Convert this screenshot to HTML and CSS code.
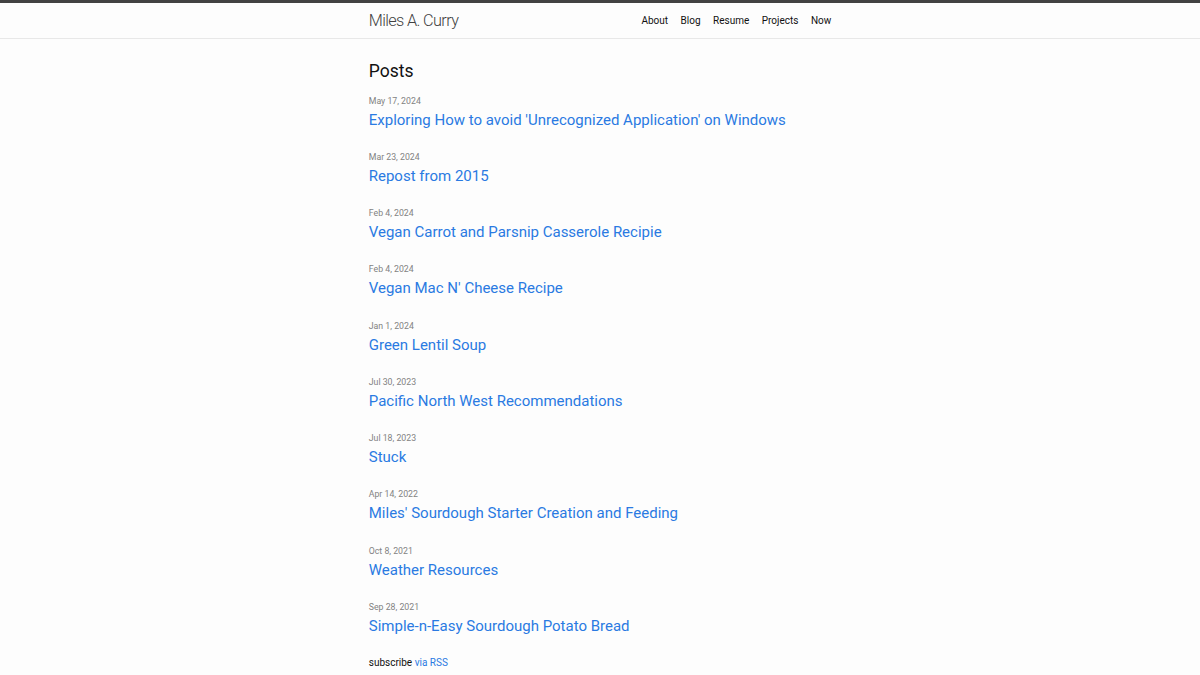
FILE: index.html
```html
<!DOCTYPE html>
<html lang="en">
<head>
<meta charset="utf-8">
<title>Miles A. Curry</title>
<link rel="stylesheet" href="styles.css">
</head>
<body>
<header class="site-header">
  <div class="wrapper header-inner">
    <a class="site-title" href="#">Miles A. Curry</a>
    <nav class="site-nav">
      <a class="page-link" href="#">About</a>
      <a class="page-link" href="#">Blog</a>
      <a class="page-link" href="#">Resume</a>
      <a class="page-link" href="#">Projects</a>
      <a class="page-link" href="#">Now</a>
    </nav>
  </div>
</header>
<main class="page-content">
  <div class="wrapper">
    <h2 class="post-list-heading">Posts</h2>
    <ul class="post-list">
      <li><span class="post-meta">May 17, 2024</span><a class="post-link" href="#">Exploring How to avoid 'Unrecognized Application' on Windows</a></li>
      <li><span class="post-meta">Mar 23, 2024</span><a class="post-link" href="#">Repost from 2015</a></li>
      <li><span class="post-meta">Feb 4, 2024</span><a class="post-link" href="#">Vegan Carrot and Parsnip Casserole Recipie</a></li>
      <li><span class="post-meta">Feb 4, 2024</span><a class="post-link" href="#">Vegan Mac N' Cheese Recipe</a></li>
      <li><span class="post-meta">Jan 1, 2024</span><a class="post-link" href="#">Green Lentil Soup</a></li>
      <li><span class="post-meta">Jul 30, 2023</span><a class="post-link" href="#">Pacific North West Recommendations</a></li>
      <li><span class="post-meta">Jul 18, 2023</span><a class="post-link" href="#">Stuck</a></li>
      <li><span class="post-meta">Apr 14, 2022</span><a class="post-link" href="#">Miles' Sourdough Starter Creation and Feeding</a></li>
      <li><span class="post-meta">Oct 8, 2021</span><a class="post-link" href="#">Weather Resources</a></li>
      <li><span class="post-meta">Sep 28, 2021</span><a class="post-link" href="#">Simple-n-Easy Sourdough Potato Bread</a></li>
    </ul>
    <p class="rss-subscribe">subscribe <a href="#">via RSS</a></p>
  </div>
</main>
</body>
</html>
```

FILE: styles.css
```css
html, body {
  margin: 0;
  padding: 0;
}
body {
  background: #fdfdfd;
  color: #111111;
  font-family: Roboto, "Liberation Sans", sans-serif;
  font-size: 10px;
  line-height: 1.5;
  font-weight: 400;
}
a {
  color: #2a7ae2;
  text-decoration: none;
}
.wrapper {
  width: 462.5px;
  margin: 0 auto;
}
.site-header {
  border-top: 3px solid #424242;
  border-bottom: 1px solid #e8e8e8;
}
.header-inner {
  height: 35px;
  display: flex;
  align-items: center;
  justify-content: space-between;
}
.site-title {
  font-size: 16.25px;
  font-weight: 300;
  letter-spacing: -0.625px;
  color: #424242;
  line-height: 35px;
}
.site-nav {
  display: flex;
  gap: 12.5px;
}
.page-link {
  color: #111111;
  font-size: 10px;
  line-height: 15px;
}
.page-content {
  padding: 18.75px 0;
}
.post-list-heading {
  font-size: 17.5px;
  font-weight: 400;
  line-height: 26.25px;
  margin: 0 0 10.5px;
}
.post-list {
  list-style: none;
  margin: 0;
  padding: 0;
}
.post-list li {
  margin-bottom: 19.625px;
}
.post-meta {
  display: block;
  font-size: 8.75px;
  line-height: 13.125px;
  margin-bottom: 1px;
  color: #828282;
}
.post-link {
  display: block;
  font-size: 15px;
  line-height: 22.5px;
}
.rss-subscribe {
  margin: -1.8px 0 0;
  font-size: 10px;
  line-height: 15px;
}
```
